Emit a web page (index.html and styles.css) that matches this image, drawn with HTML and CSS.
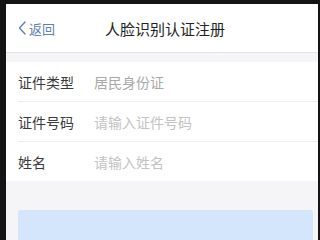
FILE: index.html
```html
<!DOCTYPE html>
<html lang="zh">
<head>
<meta charset="utf-8">
<link rel="stylesheet" href="styles.css">
</head>
<body>
<div class="screen">
  <header class="nav">
    <div class="back">
      <svg class="chev" width="8" height="14" viewBox="0 0 8 14"><path d="M7 1 L1.5 7 L7 13" fill="none" stroke="#5f82a8" stroke-width="1.4" stroke-linecap="round" stroke-linejoin="round"/></svg>
      <span>返回</span>
    </div>
    <div class="title">人脸识别认证注册</div>
    <div></div>
  </header>
  <div class="form">
    <div class="row"><span class="label">证件类型</span><span class="value">居民身份证</span></div>
    <div class="row"><span class="label">证件号码</span><span class="ph">请输入证件号码</span></div>
    <div class="row"><span class="label">姓名</span><span class="ph">请输入姓名</span></div>
  </div>
  <div class="btn"></div>
</div>
</body>
</html>
```
FILE: styles.css
```css
html, body { margin: 0; height: 100vh; overflow: hidden; }
body {
  background: #141414;
  padding: 4px 2px 0 6px;
  box-sizing: border-box;
  font-family: "Noto Sans CJK SC", "Noto Sans", sans-serif;
}
.screen {
  background: #f5f5f7;
  height: 100%;
  overflow: hidden;
  display: flex;
  flex-direction: column;
}
.nav {
  height: 48px;
  flex: none;
  background: #fff;
  border-bottom: 1px solid #e3e3e5;
  display: grid;
  grid-template-columns: 1fr auto 1fr;
  align-items: center;
}
.back {
  display: flex;
  align-items: center;
  gap: 3px;
  padding-left: 12px;
  color: #5f82a8;
  font-size: 13px;
}
.chev { display: block; }
.title {
  font-size: 15px;
  color: #222;
  padding-left: 6px;
}
.form {
  margin-top: 9px;
  background: #fff;
  flex: none;
}
.row {
  height: 39px;
  margin-left: 12px;
  border-bottom: 1px solid #eeeef0;
  display: flex;
  align-items: center;
  font-size: 14px;
}
.row:last-child { border-bottom: none; }
.label { width: 76px; color: #3a3a3a; }
.value { color: #a8a8a8; }
.ph { color: #c2c2c4; }
.btn {
  margin: 29px 5px 0 12px;
  flex: 1 0 19px;
  background: #d3e6fc;
  border-radius: 3px 3px 0 0;
}
```
